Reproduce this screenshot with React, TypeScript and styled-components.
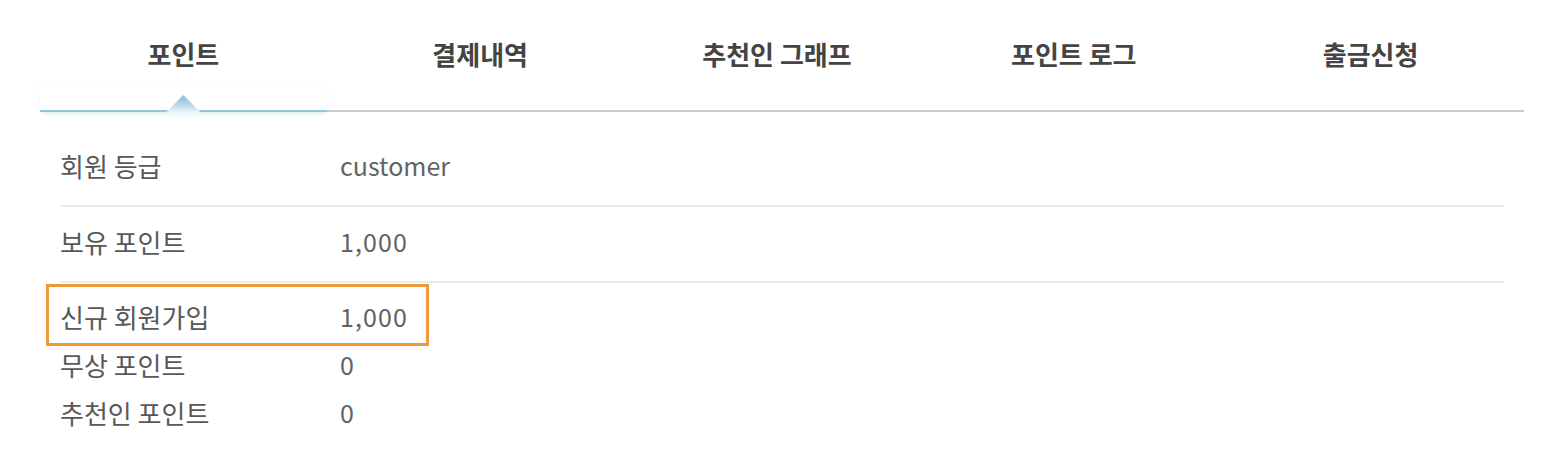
import React, { useState } from "react";
import styled, { createGlobalStyle } from "styled-components";

const GlobalStyle = createGlobalStyle`
  body {
    margin: 0;
    background: #fff;
    font-family: "Noto Sans CJK KR", "Noto Sans", sans-serif;
  }
`;

const Page = styled.div`
  padding: 0 36px 0 40px;
`;

const TabBar = styled.div`
  display: flex;
  border-bottom: 2px solid #cccccc;
`;

const Tab = styled.button<{ active: boolean }>`
  position: relative;
  flex: 1 1 0;
  height: 110px;
  padding: 0 10px 3px 0;
  border: none;
  background: transparent;
  display: flex;
  align-items: center;
  justify-content: center;
  font-family: inherit;
  font-size: 26px;
  font-weight: 700;
  color: #444;
  cursor: pointer;

  ${({ active }) =>
    active &&
    `
    &::before {
      content: "";
      position: absolute;
      left: 0;
      right: 10px;
      top: 82px;
      bottom: -2px;
      border-bottom: 2px solid #98c3dc;
      box-shadow: 0 4px 5px -3px rgba(152, 195, 220, 0.4),
        0 0 3px rgba(210, 230, 242, 0.12);
    }
    &::after {
      content: "";
      position: absolute;
      left: calc(50% - 5px - 17px);
      bottom: -19px;
      width: 34px;
      height: 34px;
      clip-path: polygon(50% 0, 100% 50%, 50% 100%, 0 50%);
      background: linear-gradient(to bottom, #84bbdb 0%, #bcdaec 30%, #eef6fb 52%, #ffffff 72%);
    }
  `}
`;

const List = styled.div`
  margin: 19px 20px 0 20px;
`;

const Row = styled.div<{ compact?: boolean; highlighted?: boolean }>`
  position: relative;
  box-sizing: border-box;
  display: flex;
  align-items: center;
  height: ${({ compact }) => (compact ? "48px" : "76px")};
  padding-bottom: ${({ compact }) => (compact ? "4px" : "6px")};
  border-bottom: ${({ compact }) => (compact ? "none" : "2px solid #ebebeb")};
  color: #585858;

  ${({ highlighted }) =>
    highlighted &&
    `
    &::after {
      content: "";
      position: absolute;
      left: -14px;
      top: -10px;
      width: 383px;
      height: 62px;
      box-sizing: border-box;
      border: 3px solid #f0993b;
      pointer-events: none;
    }
  `}
`;

const Detail = styled.div`
  padding-top: 11px;
`;

const Label = styled.span`
  width: 280px;
  flex: none;
  font-size: 26px;
`;

const Value = styled.span<{ numeric?: boolean }>`
  font-size: 25px;
  color: #636363;
  letter-spacing: ${({ numeric }) => (numeric ? "1.1px" : "0")};
`;

const tabs = ["포인트", "결제내역", "추천인 그래프", "포인트 로그", "출금신청"];

export default function App() {
  const [active, setActive] = useState(0);

  return (
    <Page>
      <GlobalStyle />
      <TabBar>
        {tabs.map((t, i) => (
          <Tab key={t} active={i === active} onClick={() => setActive(i)}>
            {t}
          </Tab>
        ))}
      </TabBar>
      <List>
        <Row>
          <Label>회원 등급</Label>
          <Value>customer</Value>
        </Row>
        <Row>
          <Label>보유 포인트</Label>
          <Value numeric>1,000</Value>
        </Row>
        <Detail>
          <Row compact highlighted>
            <Label>신규 회원가입</Label>
            <Value numeric>1,000</Value>
          </Row>
          <Row compact>
            <Label>무상 포인트</Label>
            <Value numeric>0</Value>
          </Row>
          <Row compact>
            <Label>추천인 포인트</Label>
            <Value numeric>0</Value>
          </Row>
        </Detail>
      </List>
    </Page>
  );
}
